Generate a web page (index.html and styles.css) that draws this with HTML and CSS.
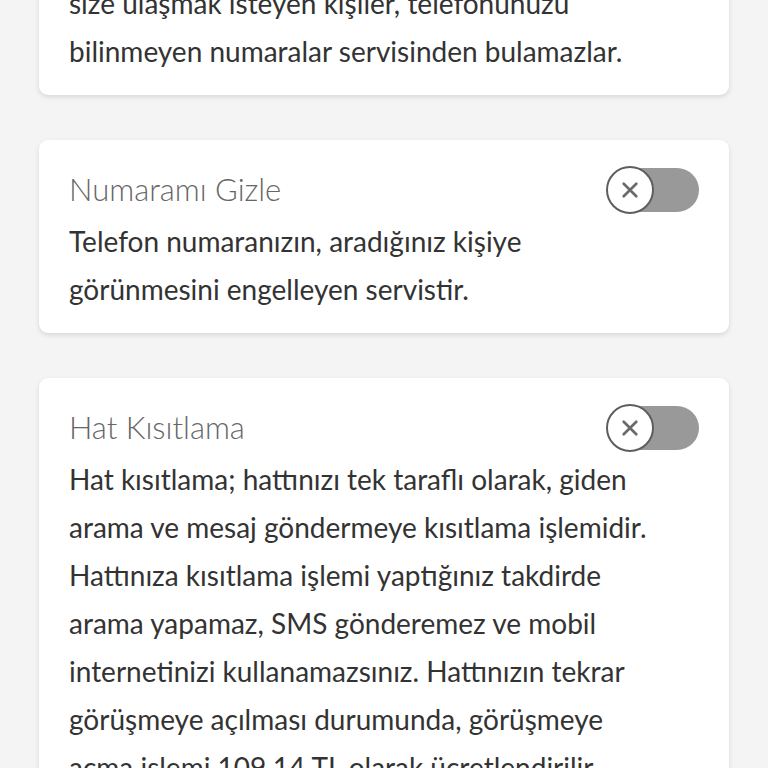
FILE: index.html
```html
<!DOCTYPE html>
<html lang="tr">
<head>
    <meta charset="UTF-8">
    <meta name="viewport" content="width=device-width, initial-scale=1.0">
    <title>Servisler</title>
    <link rel="stylesheet" href="styles.css">
</head>
<body>

<div class="list">
    <div class="card card-first">
        <div class="card-head">
            <div class="card-title">Bilinmeyen Numaralar</div>
            <div class="toggle">
                <span class="knob">
                    <svg viewBox="0 0 20 20" width="18" height="18"><path d="M3 3 L17 17 M17 3 L3 17" stroke="#6a6a6a" stroke-width="3" stroke-linecap="round"/></svg>
                </span>
            </div>
        </div>
        <p class="card-text">Bu servisi aktif ettiğinizde sizi arayan ve<br>size ulaşmak isteyen kişiler, telefonunuzu bilinmeyen numaralar servisinden bulamazlar.</p>
    </div>

    <div class="card">
        <div class="card-head">
            <div class="card-title">Numaramı Gizle</div>
            <div class="toggle">
                <span class="knob">
                    <svg viewBox="0 0 20 20" width="18" height="18"><path d="M3 3 L17 17 M17 3 L3 17" stroke="#6a6a6a" stroke-width="3" stroke-linecap="round"/></svg>
                </span>
            </div>
        </div>
        <p class="card-text">Telefon numaranızın, aradığınız kişiye görünmesini engelleyen servistir.</p>
    </div>

    <div class="card">
        <div class="card-head">
            <div class="card-title">Hat Kısıtlama</div>
            <div class="toggle">
                <span class="knob">
                    <svg viewBox="0 0 20 20" width="18" height="18"><path d="M3 3 L17 17 M17 3 L3 17" stroke="#6a6a6a" stroke-width="3" stroke-linecap="round"/></svg>
                </span>
            </div>
        </div>
        <p class="card-text">Hat kısıtlama; hattınızı tek taraflı olarak, giden arama ve mesaj göndermeye kısıtlama işlemidir. Hattınıza kısıtlama işlemi yaptığınız takdirde arama yapamaz, SMS gönderemez ve mobil internetinizi kullanamazsınız. Hattınızın tekrar görüşmeye açılması durumunda, görüşmeye açma işlemi 109,14 TL olarak ücretlendirilir.</p>
    </div>
</div>

</body>
</html>
```

FILE: styles.css
```css
html, body {
    margin: 0;
    height: 100%;
    overflow: hidden;
}
body {
    background-color: #f4f4f4;
    font-family: Lato, "Open Sans", sans-serif;
    color: #333;
}
.list {
    display: flex;
    flex-direction: column;
    gap: 45px;
    padding: 0 39px;
}
.card {
    background-color: #fff;
    border-radius: 9px;
    box-shadow: 0px 2px 5px rgba(0, 0, 0, 0.12);
    padding: 29px 30px 20px 30px;
}
.card-first {
    margin-top: -146px;
}
.card-head {
    display: flex;
    justify-content: space-between;
    align-items: center;
    height: 40px;
    margin-bottom: 8px;
}
.card-title {
    font-size: 31px;
    font-weight: 300;
    color: #666;
}
.card-text {
    margin: 0;
    padding-right: 40px;
    font-size: 28px;
    line-height: 48px;
    color: #333;
}
.toggle {
    position: relative;
    width: 92px;
    height: 44px;
    margin-top: 2px;
    border-radius: 22px;
    background-color: #999;
}
.knob {
    position: absolute;
    left: -1px;
    top: -2px;
    width: 44px;
    height: 44px;
    border-radius: 50%;
    border: 2px solid #5e5e5e;
    background-color: #fff;
    display: flex;
    justify-content: center;
    align-items: center;
}
```
